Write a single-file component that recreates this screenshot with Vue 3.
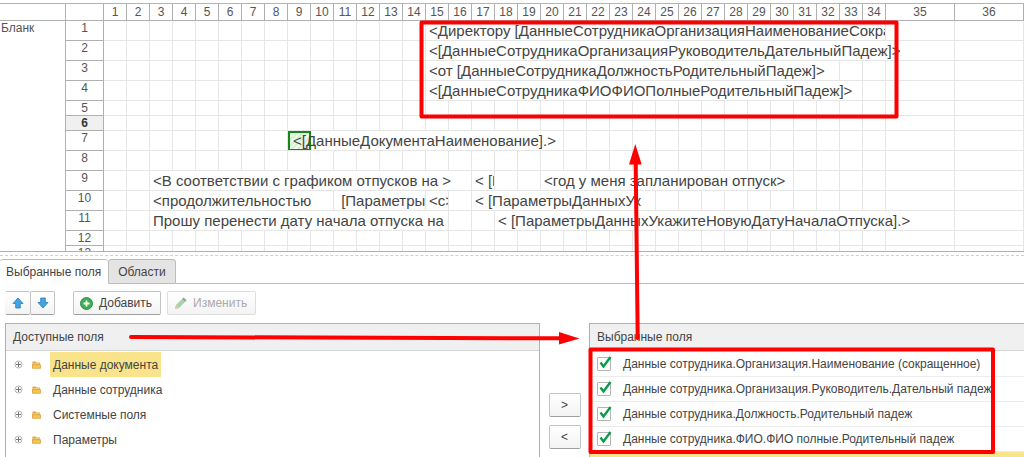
<script setup>
import { ref } from 'vue'

const columns = Array.from({ length: 36 }, (_, i) => i + 1)

const content = {
  1: [{ col: 15, span: 20, text: '<Директору [ДанныеСотрудникаОрганизацияНаименованиеСокращенное]>' }],
  2: [{ col: 15, span: 21, text: '<[ДанныеСотрудникаОрганизацияРуководительДательныйПадеж]>' }],
  3: [{ col: 15, span: 18, text: '<от [ДанныеСотрудникаДолжностьРодительныйПадеж]>' }],
  4: [{ col: 15, span: 19, text: '<[ДанныеСотрудникаФИОФИОПолныеРодительныйПадеж]>' }],
  7: [{ col: 9, span: 12, text: '<[ДанныеДокументаНаименование].>', selected: true }],
  9: [
    { col: 3, span: 14, text: '<В соответствии с графиком отпусков на >' },
    { col: 17, span: 1, text: '< [ПараметрыДанных' },
    { col: 20, span: 11, text: '<год у меня запланирован отпуск>' },
  ],
  10: [
    { col: 3, span: 8, text: '<продолжительностью' },
    { col: 11, span: 4, text: '\u00a0[ПараметрыДанных' },
    { col: 15, span: 1, text: '<с>' },
    { col: 17, span: 8, text: '< [ПараметрыДанныхУк' },
  ],
  11: [
    { col: 3, span: 13, text: 'Прошу перенести дату начала отпуска на' },
    { col: 18, span: 18, text: '< [ПараметрыДанныхУкажитеНовуюДатуНачалаОтпуска].>' },
  ],
}

const shortRows = [5, 6, 12]

const rows = Array.from({ length: 13 }, (_, i) => {
  const number = i + 1
  const filled = content[number] || []
  const cells = []
  let col = 1
  while (col <= columns.length) {
    const cell = filled.find((c) => c.col === col) || { col, span: 1, text: '' }
    cells.push(cell)
    col += cell.span
  }
  return { number, cells, short: shortRows.includes(number), current: number === 6 }
})

const tree = ['Данные документа', 'Данные сотрудника', 'Системные поля', 'Параметры']
const activeNode = ref(0)

const fields = ref([
  { name: 'Данные сотрудника.Организация.Наименование (сокращенное)', on: true },
  { name: 'Данные сотрудника.Организация.Руководитель.Дательный падеж', on: true },
  { name: 'Данные сотрудника.Должность.Родительный падеж', on: true },
  { name: 'Данные сотрудника.ФИО.ФИО полные.Родительный падеж', on: true },
])
</script>

<template>
  <div class="page">
    <div class="sheet">
      <table>
        <colgroup>
          <col class="c-section" />
          <col class="c-number" />
          <col v-for="n in 34" :key="n" class="c-narrow" />
          <col class="c-wide" />
          <col />
        </colgroup>
        <thead>
          <tr>
            <th></th>
            <th></th>
            <th v-for="n in columns" :key="n" scope="col">{{ n }}</th>
          </tr>
        </thead>
        <tbody>
          <tr v-for="row in rows" :key="row.number" :class="{ short: row.short }">
            <th v-if="row.number === 1" class="section" rowspan="13" scope="rowgroup">Бланк</th>
            <th class="number" :class="{ current: row.current }" scope="row">{{ row.number }}</th>
            <td
              v-for="cell in row.cells"
              :key="cell.col"
              :colspan="cell.span"
              :class="{ selected: cell.selected }"
            ><span v-if="cell.text">{{ cell.text }}</span></td>
          </tr>
        </tbody>
      </table>
    </div>
    <div class="splitter"></div>

    <div class="tabs" role="tablist">
      <button type="button" class="tab active" role="tab" aria-selected="true">Выбранные поля</button>
      <button type="button" class="tab" role="tab" aria-selected="false">Области</button>
      <div class="tab-fill"></div>
    </div>

    <div class="toolbar">
      <div class="pair">
        <button type="button" class="btn" aria-label="Вверх">
          <svg width="12" height="12" viewBox="0 0 12 12"><path d="M6 1 11 6.5H8.3V11H3.7V6.5H1Z" fill="#42a5e6" stroke="#287bb5" stroke-width=".8" /></svg>
        </button>
        <button type="button" class="btn" aria-label="Вниз">
          <svg width="12" height="12" viewBox="0 0 12 12"><path d="M6 11 1 5.5H3.7V1H8.3V5.5H11Z" fill="#42a5e6" stroke="#287bb5" stroke-width=".8" /></svg>
        </button>
      </div>
      <button type="button" class="btn add">
        <svg width="13" height="13" viewBox="0 0 13 13">
          <circle cx="6.5" cy="6.5" r="6" fill="#3fae52" stroke="#2c9443" />
          <path d="M6.5 3.5V9.5M3.5 6.5H9.5" stroke="#fff" stroke-width="1.8" />
        </svg>
        Добавить
      </button>
      <button type="button" class="btn edit" disabled>
        <svg width="13" height="13" viewBox="0 0 13 13">
          <path d="M1 12 2 8 8 2 11 5 5 11Z" fill="#a3d6ab" />
          <path d="M8 2 9.7 .6 12.5 3.2 11 5Z" fill="#9c9c9c" />
          <path d="M1 12 2 8 5 11Z" fill="#e6c69a" />
        </svg>
        Изменить
      </button>
    </div>

    <div class="panels">
      <section class="panel">
        <h2>Доступные поля</h2>
        <ul>
          <li v-for="(node, i) in tree" :key="node" class="node">
            <button type="button" class="expand" :aria-label="'Развернуть: ' + node">
              <svg width="9" height="9" viewBox="0 0 9 9">
                <circle cx="4.5" cy="4.5" r="3.5" fill="#fff" stroke="#b4b4b4" />
                <path d="M4.5 2V7M2 4.5H7" stroke="#777" />
              </svg>
            </button>
            <svg class="folder" width="9" height="9" viewBox="0 0 9 9">
              <path d="M.5 8V1.5H3.5L4.5 2.5H8V8Z" fill="#e2a63a" />
              <path d="M1.5 3.5H7.5V4.5H1.5Z" fill="#fff0b8" />
              <path d="M.5 8.3V4.7H8.5V8.3Z" fill="#f7c64e" stroke="#d79a35" stroke-width=".7" />
            </svg>
            <button type="button" class="name" :class="{ active: i === activeNode }" @click="activeNode = i">{{ node }}</button>
          </li>
        </ul>
      </section>

      <div class="movers">
        <button type="button" class="btn" aria-label="Добавить поле">&gt;</button>
        <button type="button" class="btn" aria-label="Убрать поле">&lt;</button>
      </div>

      <section class="panel chosen">
        <h2>Выбранные поля</h2>
        <ul>
          <li v-for="field in fields" :key="field.name">
            <label>
              <span class="box">
                <input v-model="field.on" type="checkbox" />
                <svg v-if="field.on" width="16" height="16" viewBox="0 0 16 16"><path d="M3.5 7.5 6.5 11.5 13.5 2" fill="none" stroke="#0b9b4c" stroke-width="2.4" /></svg>
              </span>
              {{ field.name }}
            </label>
          </li>
          <li class="highlight"></li>
        </ul>
      </section>
    </div>

    <svg class="marks" width="1024" height="457" viewBox="0 0 1024 457" aria-hidden="true">
      <g fill="none" stroke="#f00" stroke-width="4" stroke-linejoin="round">
        <rect x="421.5" y="22.5" width="475" height="94" />
        <rect x="590.5" y="349.5" width="402.5" height="102.5" />
        <path d="M131 337 562 338.3M637.7 338 635.7 162" stroke-linecap="round" />
      </g>
      <path d="M559 332 579.5 338.5 559 344.5ZM629 164.5 635.3 144 641.7 164.5Z" fill="#f00" />
    </svg>
  </div>
</template>

<style>
body {
  margin: 0;
  overflow: hidden;
}
</style>

<style scoped>
.page {
  position: relative;
  display: flex;
  flex-direction: column;
  height: 100vh;
  overflow: hidden;
  box-sizing: border-box;
  padding-top: 3px;
  background: #fff;
  color: #444;
  font: 12px/16px "Liberation Sans", Arial, sans-serif;
}
.page *,
.page *::before {
  box-sizing: border-box;
}
button {
  font: inherit;
  color: inherit;
}
.sheet {
  flex: none;
  height: 249px;
  overflow: hidden;
  border-top: 1px solid #b4b4b4;
  border-bottom: 1px solid #b0b0b0;
}
table {
  width: 100%;
  table-layout: fixed;
  border-collapse: separate;
  border-spacing: 0;
}
.c-section {
  width: 66px;
}
.c-number {
  width: 38px;
}
.c-narrow {
  width: 23px;
}
.c-wide {
  width: 69px;
}
th,
td {
  height: 20px;
  padding: 0;
  overflow: hidden;
  vertical-align: top;
  white-space: nowrap;
  border-right: 1px solid #e6e6e6;
  border-bottom: 1px solid #e6e6e6;
}
th {
  font-weight: normal;
  font-size: 12px;
  line-height: 14px;
  color: #555;
  border-color: #b0b0b0;
}
thead th {
  height: 17px;
  line-height: 16px;
}
.short th,
.short td {
  height: 15px;
}
.section {
  padding-left: 1px;
  text-align: left;
}
.number.current {
  background: #f0f0f0;
  font-weight: bold;
  color: #333;
}
td {
  padding-left: 3px;
  font-size: 15px;
  line-height: 19px;
}
td.selected {
  position: relative;
  padding-left: 5px;
}
td.selected::before {
  content: "";
  position: absolute;
  left: 0;
  top: 0;
  width: 23px;
  height: 20px;
  border: 2px solid #16861b;
  background: repeating-linear-gradient(135deg, #d3f2d0 0 2px, #effbee 2px 4px);
}
td.selected span {
  position: relative;
}
.splitter {
  flex: none;
  height: 7px;
  padding-top: 3px;
}
.splitter::before {
  content: "";
  display: block;
  border-top: 1px dashed #d0d0d0;
}
.tabs {
  flex: none;
  display: flex;
  height: 25px;
}
.tab {
  padding: 0 9px;
  border: 1px solid #bbb;
  border-radius: 3px 3px 0 0;
  background: #e4e4e4;
}
.tab.active {
  padding: 0 7px 0 6px;
  border-width: 1px 0 0;
  background: #fff;
}
.tab-fill {
  flex: 1;
  border-bottom: 1px solid #bbb;
}
.toolbar {
  flex: none;
  display: flex;
  padding: 7px 5px 8px;
}
.pair {
  display: flex;
  margin-right: 18px;
}
.btn {
  display: flex;
  align-items: center;
  justify-content: center;
  gap: 6px;
  height: 24px;
  padding: 0 8px 0 6px;
  border: 1px solid #c4c4c4;
  border-bottom-color: #a0a0a0;
  border-radius: 2px;
  background: linear-gradient(#fff, #f3f3f3);
}
.pair .btn {
  width: 25px;
  padding: 0;
}
.pair .btn:first-child {
  border-left-color: transparent;
  border-right: 0;
}
.add {
  margin-right: 6px;
}
.edit {
  color: #aaa;
  border-color: #ddd;
}
.panels {
  flex: 1;
  min-height: 0;
  display: grid;
  grid-template-columns: minmax(0, 535fr) 49px minmax(0, 435fr);
  padding-left: 5px;
}
.panel {
  border: 1px solid #b0b0b0;
  border-bottom: 0;
  overflow: hidden;
}
.chosen {
  border-right: 0;
}
h2 {
  margin: 0;
  height: 27px;
  padding-left: 7px;
  border-bottom: 1px solid #d4d4d4;
  background: #f0f0f0;
  font-size: 12px;
  line-height: 26px;
  font-weight: normal;
}
ul {
  margin: 0;
  padding: 1px 0 0;
  list-style: none;
}
.node {
  display: flex;
  align-items: center;
  height: 25px;
}
.expand {
  display: flex;
  margin-left: 8px;
  padding: 0;
  border: 0;
  background: none;
}
.folder {
  margin: 0 9px;
}
.name {
  height: 25px;
  padding: 0 3px;
  border: 0;
  background: none;
}
.name.active {
  background: #fae48b;
}
.movers {
  display: flex;
  flex-direction: column;
  align-items: center;
  gap: 8px;
  padding-top: 70px;
}
.movers .btn {
  width: 32px;
  padding: 0;
}
.chosen li {
  height: 25px;
  border-bottom: 1px solid #ececec;
}
.chosen label {
  display: flex;
  align-items: center;
  gap: 12px;
  height: 24px;
  padding-left: 7px;
  white-space: nowrap;
}
.box {
  position: relative;
  display: flex;
}
.box input {
  appearance: none;
  width: 14px;
  height: 14px;
  margin: 0;
  border: 1px solid #b4b4b4;
  border-radius: 1px;
  background: #fff;
}
.box svg {
  position: absolute;
  left: 0;
  top: -2px;
  pointer-events: none;
}
.chosen .highlight {
  background: #fae48b;
}
.marks {
  position: absolute;
  left: 0;
  top: 0;
  pointer-events: none;
}
</style>
